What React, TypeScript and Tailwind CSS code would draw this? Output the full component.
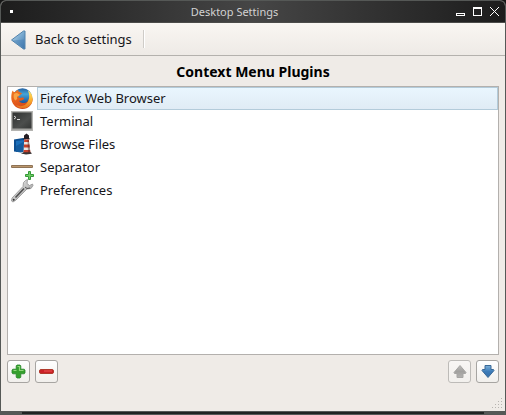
import { useState, type ReactNode } from "react";

function FirefoxIcon() {
  return (
    <svg width="22" height="23" viewBox="0 0 22 23" aria-hidden="true">
      <defs>
        <linearGradient id="globe" x1="0" y1="0" x2="0" y2="1">
          <stop offset="0" stopColor="#2560a0" />
          <stop offset="0.3" stopColor="#45a5d8" />
          <stop offset="0.7" stopColor="#1e5fa5" />
          <stop offset="1" stopColor="#173c78" />
        </linearGradient>
        <linearGradient id="fox" x1="0" y1="0" x2="0.6" y2="1">
          <stop offset="0" stopColor="#ef7d22" />
          <stop offset="0.5" stopColor="#e65f1c" />
          <stop offset="1" stopColor="#cf451b" />
        </linearGradient>
        <linearGradient id="tail" x1="0" y1="0" x2="0" y2="1">
          <stop offset="0" stopColor="#ffe36a" />
          <stop offset="0.5" stopColor="#fbb632" />
          <stop offset="1" stopColor="#e5701e" />
        </linearGradient>
      </defs>
      <circle cx="11.500" cy="11" r="9.800" fill="url(#globe)" />
      <path d="M1.500 3.500C.3 6.500 0 10 .5 13c1 5 5.500 9 11 9 6 0 10.200-4.500 10.200-10.500l-4 .500c-.5 3-3 4.500-5.700 4-2 .2-3.500-.8-4-2.500 1.500.6 2.700.1 4-.8.8-.5 1.300-.4 1.200-1-.7-1.300-2-1.300-3.700-.8-1.500.2-2.300-.8-2.200-2 .5-.5 1.500-.3 2-.6 0-.8 1.500-1.200 1.900-2.100-1.100-.2-2-.5-2.700-1.400C6.700 4.500 7 3.700 7.800 3 6.300 3.200 5 3.800 4.200 5 3 5 2 4.500 1.500 3.500z" fill="url(#fox)" />
      <path d="M17 3.500c4.500 2.500 5.700 8.500 3.500 13-2 3.200-5 4.800-8.500 4.800-3 0-5.500-1.200-7-3 4 1.500 8 1 10.500-1.800 3-3.200 3.500-8 1.500-13z" fill="url(#tail)" />
      <path d="M3 7c1-1 2.300-1.200 3.500-.8l2.500 1.600-1.700 1.400-1.300.6.200 2.200-2 1.500C2.500 11.500 2.200 9 3 7z" fill="#f9a546" />
    </svg>
  );
}

function TerminalIcon() {
  return (
    <svg width="22" height="22" viewBox="0 0 22 22" aria-hidden="true">
      <defs>
        <linearGradient id="screen" x1="0" y1="0" x2="1" y2="1">
          <stop offset="0" stopColor="#303231" />
          <stop offset="0.6" stopColor="#4c4e4d" />
          <stop offset="1" stopColor="#343635" />
        </linearGradient>
      </defs>
      <rect x="0.500" y="0.500" width="21" height="19" fill="#a3a3a0" stroke="#b4b4b1" />
      <rect x="1.500" y="1.500" width="19" height="16" fill="url(#screen)" />
      <path d="M3 5l2 1.500L3 8M6 8.500h3" fill="none" stroke="#ddd" />
    </svg>
  );
}

function FilesIcon() {
  return (
    <svg width="22" height="23" viewBox="0 0 22 23" aria-hidden="true">
      <path d="M3 6.500L12 5l3 1v12l-5 1.500-7-1z" fill="#0d4f92" />
      <path d="M5 8l9-1v12l-9 0z" fill="#1c6fba" />
      <path d="M5 13l9-5v11H5z" fill="#145c9f" />
      <path d="M13 2.500L15.500 .500 18 2.500V5h.5v1.500h-6V5h.5z" fill="#241d22" />
      <path d="M13.200 6.500h4.600L19.500 20h-7z" fill="#ece5e0" />
      <path d="M13.200 6.500h4.600l.3 2.500h-5zM13 11.500h5.500l.3 3h-6zM12.700 17h6.400l.4 3h-7z" fill="#c8402a" />
      <path d="M16.500 6.500h1.300L19.500 20H17z" fill="#40201f" opacity=".45" />
      <path d="M10 20.500l2.500-1.200h7.500l.8 1.400-5.800.8z" fill="#3b3434" />
    </svg>
  );
}

function SeparatorIcon() {
  return (
    <svg width="22" height="23" viewBox="0 0 22 23" className="overflow-visible" aria-hidden="true">
      <rect x="0" y="9" width="22" height="3" rx="1" fill="#8f7355" />
      <rect x="1" y="10" width="20" height="1" fill="#bb976d" />
      <path d="M17.500 15.500h2v3h3v2h-3v3h-2v-3h-3v-2h3z" fill="#6fcf62" stroke="#35983a" />
    </svg>
  );
}

function WrenchIcon() {
  return (
    <svg width="22" height="24" viewBox="0 0 22 24" className="overflow-visible" aria-hidden="true">
      <defs>
        <linearGradient id="steel" x1="0" y1="0" x2="1" y2="1">
          <stop offset="0" stopColor="#f5f5f5" />
          <stop offset="0.5" stopColor="#c4c4c4" />
          <stop offset="1" stopColor="#888" />
        </linearGradient>
      </defs>
      <path d="M14.500 1.500l2-1-.5 4 2.500 2 3-1.500.5 1.500-2 3-4 .5L5 21l-3 2-1.500-1 .5-3L12 7.500l.5-4z" fill="url(#steel)" stroke="#929292" strokeWidth=".8" />
      <path d="M13 9.500L4.500 18.500" stroke="#4d4d4d" strokeWidth="1.600" />
      <path d="M14 8l2 1.500 3-.5" fill="none" stroke="#555" />
      <circle cx="2.700" cy="20.800" r="1" fill="#333" />
    </svg>
  );
}

function ArrowIcon({ up, disabled }: { up?: boolean; disabled?: boolean }) {
  const id = disabled ? "greyArrow" : "blueArrow";
  return (
    <svg width="14" height="16" viewBox="0 0 14 16" aria-hidden="true">
      <defs>
        <linearGradient id={id} x1="0" y1="0" x2="0" y2="1">
          <stop offset="0" stopColor={disabled ? "#bdbcba" : "#7db1d9"} />
          <stop offset="0.5" stopColor={disabled ? "#a2a19f" : "#3d7cb9"} />
          <stop offset="1" stopColor={disabled ? "#b3b2b0" : "#376ea8"} />
        </linearGradient>
      </defs>
      <path
        d={up ? "M7 1.500l6 7-.5 1H10v4H4v-4H1.500l-.5-1z" : "M4 1.500h6v4h2.500l.5 1-6 7-6-7 .5-1H4z"}
        fill={`url(#${id})`}
        stroke={disabled ? "#a7a6a4" : "#3a6997"}
      />
    </svg>
  );
}

const plugins: { name: string; icon: ReactNode }[] = [
  { name: "Firefox Web Browser", icon: <FirefoxIcon /> },
  { name: "Terminal", icon: <TerminalIcon /> },
  { name: "Browse Files", icon: <FilesIcon /> },
  { name: "Separator", icon: <SeparatorIcon /> },
  { name: "Preferences", icon: <WrenchIcon /> },
];

function ToolButton({ label, disabled, children }: { label: string; disabled?: boolean; children: ReactNode }) {
  return (
    <button
      type="button"
      aria-label={label}
      disabled={disabled}
      className="flex size-[23px] items-center justify-center rounded-[3px] border border-[#a7a5a2] bg-linear-to-b from-white to-[#f1efec] disabled:border-[#bdbbb8] disabled:from-[#f8f6f4] disabled:to-[#f2f0ed]"
    >
      {children}
    </button>
  );
}

export default function App() {
  const [selected, setSelected] = useState(0);
  return (
    <div className="flex min-h-screen flex-col bg-[#151515] font-['Noto_Sans',sans-serif] text-[13px] text-[#16161a]">
      <div className="flex grow flex-col overflow-hidden rounded-t-[6px] border-x border-t border-[#555856] bg-[#efebe7]">
        <header className="flex h-[22px] items-center border-b border-[#4c4c4a] bg-linear-to-r from-[#1d1d1d] via-[#464646] to-[#1d1d1d] pr-[6px] pl-[9px]">
          <button type="button" aria-label="Window menu" className="size-[3px] bg-white" />
          <h1 className="grow text-center text-[11px] leading-4 text-[#d2d2d2]">Desktop Settings</h1>
          <div className="flex items-center gap-2 text-white">
            <button type="button" aria-label="Minimize">
              <svg width="9" height="9" viewBox="0 0 9 9" fill="none" stroke="currentColor" shapeRendering="crispEdges">
                <path d="M.5 6.500h8v2h-8z" />
              </svg>
            </button>
            <button type="button" aria-label="Maximize">
              <svg width="9" height="9" viewBox="0 0 9 9" fill="none" stroke="currentColor" shapeRendering="crispEdges">
                <path d="M.5 .5h8v8h-8zM0 1.500h9" />
              </svg>
            </button>
            <button type="button" aria-label="Close">
              <svg width="9" height="9" viewBox="0 0 9 9" fill="none" stroke="currentColor" shapeRendering="crispEdges">
                <path d="M0 0l9 9M9 0L0 9" />
              </svg>
            </button>
          </div>
        </header>

        <nav className="flex h-[33px] items-center border-b border-[#b4b1ad] bg-linear-to-b from-[#f9f6f2] to-[#eeeae6] pl-[9px]">
          <button type="button" className="flex items-center gap-2 pt-[2px] pr-[11px]">
            <svg width="17" height="20" viewBox="0 0 17 20" aria-hidden="true">
              <defs>
                <linearGradient id="back" x1="0" y1="0" x2="1" y2="1">
                  <stop offset="0" stopColor="#c5dcec" />
                  <stop offset="0.5" stopColor="#78a9cf" />
                  <stop offset="1" stopColor="#3d74ab" />
                </linearGradient>
              </defs>
              <path d="M1.500 10L13.500 1h1.500v18h-1.500z" fill="url(#back)" stroke="#5384ad" strokeLinejoin="round" />
              <path d="M2 10.500l12-1v8z" fill="#3e78b0" opacity=".4" />
            </svg>
            Back to settings
          </button>
          <span className="h-[18px] w-[2px] border-l border-[#cfccc8] bg-white" />
        </nav>

        <main className="flex grow flex-col px-[6px] pt-[6px]">
          <h2 className="mb-1 text-center text-[14px] leading-5 font-bold text-black">Context Menu Plugins</h2>
          <ul className="grow border border-[#b3b0ad] bg-white pl-[3px]">
            {plugins.map((plugin, i) => (
              <li key={plugin.name}>
                <button
                  type="button"
                  aria-pressed={i === selected}
                  onClick={() => setSelected(i)}
                  className="flex h-[23px] w-full items-center gap-[4px] text-left"
                >
                  {plugin.icon}
                  <span
                    className={
                      i === selected
                        ? "flex h-full grow items-center border border-[#b3cbda] bg-linear-to-b from-[#e9f6fe] to-[#e0ebf5] pl-[2px]"
                        : "flex h-full grow items-center border border-transparent pl-[2px]"
                    }
                  >
                    {plugin.name}
                  </span>
                </button>
              </li>
            ))}
          </ul>
          <div className="flex gap-[5px] pt-[5px]">
            <ToolButton label="Add plugin">
              <svg width="15" height="15" viewBox="0 0 15 15" aria-hidden="true">
                <path d="M6 1h3l.8.8V5.200h3.400l.8.8v3l-.8.800H9.800v3.400L9 14H6l-.8-.8V9.800H1.800L1 9V6l.8-.8h3.400V1.800z" fill="#35a02d" stroke="#25852a" strokeWidth=".8" />
                <path d="M6.500 2.500h2v4h4M2.500 6.500h3" fill="none" stroke="#8fd77b" strokeWidth="1.200" />
              </svg>
            </ToolButton>
            <ToolButton label="Remove plugin">
              <svg width="15" height="15" viewBox="0 0 15 15" aria-hidden="true">
                <rect x=".5" y="5.500" width="14" height="4" rx="1.500" fill="#cb2027" stroke="#b03a2c" />
                <path d="M5 7h8" stroke="#e95454" />
              </svg>
            </ToolButton>
            <span className="grow" />
            <ToolButton label="Move up" disabled>
              <ArrowIcon up disabled />
            </ToolButton>
            <ToolButton label="Move down">
              <ArrowIcon />
            </ToolButton>
          </div>
        </main>

        <div className="flex h-[28px] items-end justify-end pr-[2px] pb-[2px]">
          <svg width="11" height="11" viewBox="0 0 11 11" fill="#b7b4b0" shapeRendering="crispEdges" aria-hidden="true">
            <path d="M9 0h1v1h-1zM6 3h1v1h-1zM9 3h1v1h-1zM3 6h1v1h-1zM6 6h1v1h-1zM9 6h1v1h-1zM0 9h1v1h-1zM3 9h1v1h-1zM6 9h1v1h-1zM9 9h1v1h-1z" />
          </svg>
        </div>
      </div>
      <footer className="h-1 bg-[#555856] pt-px pr-[22px] pl-[22px]">
        <div className="h-[2px] bg-[#202322]" />
      </footer>
    </div>
  );
}
